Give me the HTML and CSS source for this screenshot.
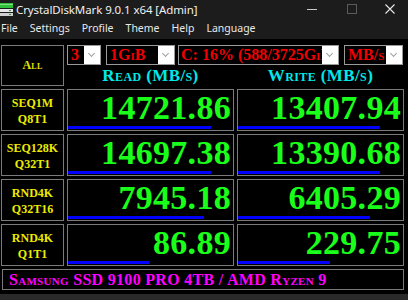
FILE: index.html
```html
<!DOCTYPE html>
<html>
<head>
<meta charset="utf-8">
<link rel="stylesheet" href="styles.css">
</head>
<body>
<div class="window">
  <div class="titlebar">
    <svg class="appicon" width="14" height="14" viewBox="0 0 14 14">
      <rect x="0" y="1" width="13" height="5" fill="#2fbf3a"/>
      <rect x="0" y="2" width="13" height="1" fill="#7fe07f"/>
      <rect x="0" y="7" width="13" height="3" fill="#e6e6e6"/>
      <rect x="0" y="11" width="13" height="3" fill="#cfcfcf"/>
      <rect x="9" y="8" width="2" height="1" fill="#3a8f3a"/>
      <rect x="9" y="12" width="2" height="1" fill="#3a8f3a"/>
    </svg>
    <span class="title">CrystalDiskMark 9.0.1 x64 [Admin]</span>
    <div class="controls">
      <span class="ctl min"><svg width="10" height="10" viewBox="0 0 10 10"><line x1="0" y1="5.5" x2="10" y2="5.5" stroke="#c8c8c8" stroke-width="1"/></svg></span>
      <span class="ctl max"><svg width="10" height="10" viewBox="0 0 10 10"><rect x="0.5" y="0.5" width="9" height="9" fill="none" stroke="#5a5a5a" stroke-width="1"/></svg></span>
      <span class="ctl close"><svg width="10" height="10" viewBox="0 0 10 10"><path d="M0.5 0.5 L9.5 9.5 M9.5 0.5 L0.5 9.5" stroke="#e8e8e8" stroke-width="1.1"/></svg></span>
    </div>
  </div>
  <div class="menubar">
    <span>File</span><span>Settings</span><span>Profile</span><span>Theme</span><span>Help</span><span>Language</span>
  </div>
  <div class="content">
    <div class="grid">
      <div class="allbtn">All</div>
      <div class="topright">
        <div class="combos">
          <div class="combo c1"><span class="ctext">3</span><span class="drop"></span></div>
          <div class="combo c2"><span class="ctext">1GiB</span><span class="drop"></span></div>
          <div class="combo c3"><span class="ctext">C: 16% (588/3725GiB)</span><span class="drop"></span></div>
          <div class="combo c4"><span class="ctext">MB/s</span><span class="drop"></span></div>
        </div>
        <div class="heads">
          <div class="head">Read (MB/s)</div>
          <div class="head">Write (MB/s)</div>
        </div>
      </div>

      <div class="label">SEQ1M<br>Q8T1</div>
      <div class="val"><span>14721.86</span><i class="bar" style="width:143px"></i></div>
      <div class="val"><span>13407.94</span><i class="bar" style="width:142px"></i></div>

      <div class="label">SEQ128K<br>Q32T1</div>
      <div class="val"><span>14697.38</span><i class="bar" style="width:143px"></i></div>
      <div class="val"><span>13390.68</span><i class="bar" style="width:142px"></i></div>

      <div class="label">RND4K<br>Q32T16</div>
      <div class="val"><span>7945.18</span><i class="bar" style="width:136px"></i></div>
      <div class="val"><span>6405.29</span><i class="bar" style="width:132px"></i></div>

      <div class="label">RND4K<br>Q1T1</div>
      <div class="val"><span>86.89</span><i class="bar" style="width:81px"></i></div>
      <div class="val"><span>229.75</span><i class="bar" style="width:92px"></i></div>

      <div class="footer">Samsung SSD 9100 PRO 4TB / AMD Ryzen 9</div>
    </div>
  </div>
  <div class="bottomedge"></div>
</div>
</body>
</html>
```
FILE: styles.css
```css
* { box-sizing: border-box; }
html, body { margin: 0; padding: 0; background: #000; }
body { width: 408px; height: 300px; overflow: hidden; }
.window { width: 408px; height: 300px; display: flex; flex-direction: column; background: #000; }

.titlebar {
  height: 18px; background: #1c1c1c; display: flex; align-items: center;
  font-family: "Noto Sans", "Open Sans", sans-serif; font-size: 11.5px; color: #f0f0f0;
}
.appicon { margin: 0 2px 0 0; flex: none; }
.title { letter-spacing: -0.1px; }
.controls { margin-left: auto; display: flex; align-items: center; }
.ctl { width: 40px; display: flex; justify-content: center; align-items: center; height: 18px; }
.ctl.close { width: 36px; }

.menubar {
  height: 21px; background: #1c1c1c; display: flex; align-items: center;
  font-family: "Noto Sans", "Open Sans", sans-serif; font-size: 10.5px; color: #e8e8e8;
  padding-left: 1px; padding-bottom: 2px;
}
.menubar span { margin-right: 12px; }

.content { flex: 1; padding: 6px 4px 0 1px; }
.grid {
  display: grid; grid-template-columns: 63px 167px 167px; column-gap: 3px;
  grid-template-rows: 41px 42px 42px 42px 42px 21px;
  row-gap: 3px;
}

.allbtn {
  border: 1px solid #7a7a7a; display: flex; align-items: center; justify-content: center;
  font-family: "Liberation Serif", serif; font-weight: bold; font-variant: small-caps;
  color: #e6e600; font-size: 12px; letter-spacing: 0.3px;
}
.topright { grid-column: 2 / span 2; display: flex; flex-direction: column; }
.combos { display: flex; height: 20px; }
.combo {
  display: flex; height: 20px; border: 1px solid #9a9a9a; background: #fff;
}
.combo .ctext {
  background: #000; color: #f00000; font-family: "Liberation Serif", serif; font-weight: bold;
  font-variant: small-caps; font-size: 16px; line-height: 18px; padding-left: 3px;
  overflow: hidden; white-space: nowrap; flex: 1;
}
.combo .drop {
  width: 16px; flex: none; background: #fff; position: relative;
}
.combo .drop::after {
  content: ""; position: absolute; left: 5px; top: 5px; width: 4px; height: 4px;
  border-right: 1px solid #a0a0a0; border-bottom: 1px solid #a0a0a0; transform: rotate(45deg);
}
.c1 { width: 34px; }
.c2 { width: 69px; margin-left: 5px; }
.c3 { width: 161px; margin-left: 3px; }
.c4 { width: 59px; margin-left: 5px; }
.c3 .ctext { padding-left: 2px; }

.heads { display: grid; grid-template-columns: 167px 167px; column-gap: 3px; flex: 1; }
.head {
  color: #00e8e8; text-align: center; font-family: "Liberation Serif", serif; font-weight: bold;
  font-variant: small-caps; font-size: 17px; line-height: 21px; letter-spacing: 0.4px;
}

.label {
  border: 1px solid #7a7a7a; display: flex; align-items: center; justify-content: center; text-align: center;
  color: #ecec00; font-family: "Liberation Serif", serif; font-weight: bold; font-size: 12px; line-height: 16px;
  padding-top: 1px;
}
.val {
  border: 1px solid #7a7a7a; position: relative; text-align: right; overflow: hidden;
}
.val span {
  display: block; color: #1aff1a; font-family: "Liberation Serif", serif; font-weight: bold;
  font-size: 34px; line-height: 36px; padding-right: 2px; letter-spacing: 0.3px;
}
.val .bar {
  position: absolute; left: 0; bottom: 1px; height: 3px; background: #0000ff; display: block;
}
.footer {
  grid-column: 1 / span 3; border: 1px solid #7a7a7a; color: #ff00ff; margin-left: 1px;
  font-family: "Liberation Serif", serif; font-weight: bold; font-variant: small-caps;
  font-size: 16px; line-height: 19px; padding-left: 6px; letter-spacing: 0.3px;
}
.bottomedge { height: 6px; background: #2a2a2a; }
```
